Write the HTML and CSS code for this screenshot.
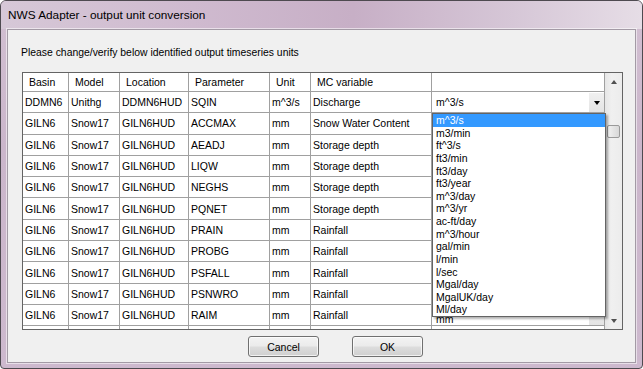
FILE: index.html
```html
<!DOCTYPE html>
<html lang="en">
<head>
    <meta charset="UTF-8">
    <meta name="viewport" content="width=device-width, initial-scale=1.0">
    <title>NWS Adapter - output unit conversion</title>
    <link rel="stylesheet" href="styles.css">
</head>
<body>
    <div class="window">
        <div class="titlebar">NWS Adapter - output unit conversion</div>
        <div class="client">
            <p class="label">Please change/verify below identified output timeseries units</p>

            <div class="grid">
                <div class="cells">
                    <div class="row head">
                        <div class="cell">Basin</div>
                        <div class="cell">Model</div>
                        <div class="cell">Location</div>
                        <div class="cell">Parameter</div>
                        <div class="cell">Unit</div>
                        <div class="cell">MC variable</div>
                        <div class="cell"></div>
                    </div>
                    <div class="row">
                        <div class="cell">DDMN6</div>
                        <div class="cell">Unithg</div>
                        <div class="cell">DDMN6HUD</div>
                        <div class="cell">SQIN</div>
                        <div class="cell">m^3/s</div>
                        <div class="cell">Discharge</div>
                        <div class="cell combo"><span>m^3/s</span><span class="drop-btn"><i class="tri-down"></i></span></div>
                    </div>
                    <!-- unit cells of the rows below are hidden by the open list -->
                    <div class="row">
                        <div class="cell">GILN6</div>
                        <div class="cell">Snow17</div>
                        <div class="cell">GILN6HUD</div>
                        <div class="cell">ACCMAX</div>
                        <div class="cell">mm</div>
                        <div class="cell">Snow Water Content</div>
                        <div class="cell"></div>
                    </div>
                    <div class="row">
                        <div class="cell">GILN6</div>
                        <div class="cell">Snow17</div>
                        <div class="cell">GILN6HUD</div>
                        <div class="cell">AEADJ</div>
                        <div class="cell">mm</div>
                        <div class="cell">Storage depth</div>
                        <div class="cell"></div>
                    </div>
                    <div class="row">
                        <div class="cell">GILN6</div>
                        <div class="cell">Snow17</div>
                        <div class="cell">GILN6HUD</div>
                        <div class="cell">LIQW</div>
                        <div class="cell">mm</div>
                        <div class="cell">Storage depth</div>
                        <div class="cell"></div>
                    </div>
                    <div class="row">
                        <div class="cell">GILN6</div>
                        <div class="cell">Snow17</div>
                        <div class="cell">GILN6HUD</div>
                        <div class="cell">NEGHS</div>
                        <div class="cell">mm</div>
                        <div class="cell">Storage depth</div>
                        <div class="cell"></div>
                    </div>
                    <div class="row">
                        <div class="cell">GILN6</div>
                        <div class="cell">Snow17</div>
                        <div class="cell">GILN6HUD</div>
                        <div class="cell">PQNET</div>
                        <div class="cell">mm</div>
                        <div class="cell">Storage depth</div>
                        <div class="cell"></div>
                    </div>
                    <div class="row">
                        <div class="cell">GILN6</div>
                        <div class="cell">Snow17</div>
                        <div class="cell">GILN6HUD</div>
                        <div class="cell">PRAIN</div>
                        <div class="cell">mm</div>
                        <div class="cell">Rainfall</div>
                        <div class="cell"></div>
                    </div>
                    <div class="row">
                        <div class="cell">GILN6</div>
                        <div class="cell">Snow17</div>
                        <div class="cell">GILN6HUD</div>
                        <div class="cell">PROBG</div>
                        <div class="cell">mm</div>
                        <div class="cell">Rainfall</div>
                        <div class="cell"></div>
                    </div>
                    <div class="row">
                        <div class="cell">GILN6</div>
                        <div class="cell">Snow17</div>
                        <div class="cell">GILN6HUD</div>
                        <div class="cell">PSFALL</div>
                        <div class="cell">mm</div>
                        <div class="cell">Rainfall</div>
                        <div class="cell"></div>
                    </div>
                    <div class="row">
                        <div class="cell">GILN6</div>
                        <div class="cell">Snow17</div>
                        <div class="cell">GILN6HUD</div>
                        <div class="cell">PSNWRO</div>
                        <div class="cell">mm</div>
                        <div class="cell">Rainfall</div>
                        <div class="cell"></div>
                    </div>
                    <div class="row">
                        <div class="cell">GILN6</div>
                        <div class="cell">Snow17</div>
                        <div class="cell">GILN6HUD</div>
                        <div class="cell">RAIM</div>
                        <div class="cell">mm</div>
                        <div class="cell">Rainfall</div>
                        <div class="cell combo low"><span>mm</span><span class="drop-btn"></span></div>
                    </div>
                    <div class="row">
                        <div class="cell"></div>
                        <div class="cell"></div>
                        <div class="cell"></div>
                        <div class="cell"></div>
                        <div class="cell"></div>
                        <div class="cell"></div>
                        <div class="cell"></div>
                    </div>
                </div>

                <div class="vscroll">
                    <div class="sb-btn"><i class="tri-up"></i></div>
                    <div class="sb-track"><div class="sb-thumb"></div></div>
                    <div class="sb-btn"><i class="tri-down gray"></i></div>
                </div>

                <!-- open combo list of the first row -->
                <ul class="droplist">
                    <li class="selected">m^3/s</li>
                    <li>m3/min</li>
                    <li>ft^3/s</li>
                    <li>ft3/min</li>
                    <li>ft3/day</li>
                    <li>ft3/year</li>
                    <li>m^3/day</li>
                    <li>m^3/yr</li>
                    <li>ac-ft/day</li>
                    <li>m^3/hour</li>
                    <li>gal/min</li>
                    <li>l/min</li>
                    <li>l/sec</li>
                    <li>Mgal/day</li>
                    <li>MgalUK/day</li>
                    <li>Ml/day</li>
                </ul>
            </div>

            <div class="buttons">
                <button class="btn">Cancel</button>
                <button class="btn">OK</button>
            </div>
        </div>
    </div>
</body>
</html>
```

FILE: styles.css
```css
body {
    margin: 0;
    padding: 0;
    background-color: #ffffff;
    font-family: "Liberation Sans", Arial, sans-serif;
}

.window {
    width: 643px;
    height: 369px;
    box-sizing: border-box;
    border: 1px solid #4e4a50;
    border-radius: 6px 6px 4px 4px;
    background: linear-gradient(180deg, #d2c0d2 0%, #cbb6cb 40%, #cdb9ce 100%);
    overflow: hidden;
}

.titlebar {
    height: 28px;
    box-sizing: border-box;
    padding: 6px 0 0 7px;
    line-height: 16px;
    font-size: 11.8px;
    color: #000000;
    background: linear-gradient(90deg, #d6c8d7 0%, #cfbacf 30%, #c7afc6 55%, #d6c7d7 80%, #e6dde6 100%);
}

.client {
    margin: 0 6px;
    height: 334px;
    box-sizing: border-box;
    border: 1px solid #a39aa5;
    background-color: #f0f0f0;
    box-shadow: 0 0 0 1px rgba(255, 255, 255, 0.55);
}

.label {
    margin: 16px 0 0 13px;
    font-size: 10.4px;
    line-height: 13px;
    color: #000000;
}

.grid {
    position: relative;
    display: flex;
    margin: 13px 0 0 14px;
    width: 601px;
    height: 258px;
    box-sizing: border-box;
    border: 1px solid #646464;
    background-color: #ffffff;
    overflow: hidden;
}

.cells {
    width: 582px;
    flex: none;
    overflow: hidden;
}

.row {
    display: grid;
    grid-template-columns: 46px 51px 69px 81px 41px 121px 173px;
    height: 21.3px;
}

.row.head {
    height: 19px;
}

.cell {
    display: flex;
    align-items: center;
    box-sizing: border-box;
    padding-left: 2px;
    border-right: 1px solid #a0a0a0;
    border-bottom: 1px solid #a0a0a0;
    font-size: 10.5px;
    color: #000000;
    white-space: nowrap;
    overflow: hidden;
}

.head .cell {
    padding-left: 6px;
    background-color: #ffffff;
}

.combo {
    justify-content: space-between;
    padding-left: 4px;
    padding-right: 0;
}

/* last row: only its lower edge shows below the list */
.combo.low {
    align-items: flex-end;
    line-height: 12px;
}

.drop-btn {
    display: flex;
    align-items: center;
    justify-content: center;
    width: 15px;
    height: calc(100% - 1px);
    margin-top: 1px;
    background: linear-gradient(180deg, #f0f0f0, #e4e4e4);
}

.tri-down {
    width: 0;
    height: 0;
    border-top: 4px solid #000000;
    border-left: 3px solid transparent;
    border-right: 3px solid transparent;
}

.tri-up {
    width: 0;
    height: 0;
    border-bottom: 4px solid #505050;
    border-left: 3.5px solid transparent;
    border-right: 3.5px solid transparent;
}

.tri-down.gray {
    border-top-color: #505050;
    border-left-width: 3.5px;
    border-right-width: 3.5px;
}

.vscroll {
    width: 17px;
    flex: none;
    display: flex;
    flex-direction: column;
    background: linear-gradient(90deg, #e6e6e6, #f0f0f0 40%, #ececec);
}

.sb-btn {
    height: 17px;
    display: flex;
    align-items: center;
    justify-content: center;
}

.sb-track {
    flex: 1;
}

.sb-thumb {
    width: 13px;
    height: 13px;
    margin: 35px 0 0 2px;
    box-sizing: border-box;
    border: 1px solid #9a9a9a;
    border-radius: 2px;
    background: linear-gradient(90deg, #f2f2f2, #e4e4e4 50%, #d8d8d8);
}

.droplist {
    position: absolute;
    left: 409px;
    top: 40px;
    width: 174px;
    height: 204px;
    box-sizing: border-box;
    margin: 0;
    padding: 0;
    list-style-type: none;
    border: 1px solid #646464;
    background-color: #ffffff;
    box-shadow: 2px 2px 2px rgba(0, 0, 0, 0.3);
}

.droplist li {
    height: 12.625px;
    line-height: 12.625px;
    padding-left: 3px;
    font-size: 10.5px;
    color: #000000;
    white-space: nowrap;
}

.droplist li.selected {
    background-color: #3399ff;
    color: #ffffff;
}

.buttons {
    display: flex;
    gap: 33px;
    margin-top: 6px;
    padding-left: 240px;
}

.btn {
    width: 71px;
    height: 21px;
    padding: 0;
    font-family: "Liberation Sans", Arial, sans-serif;
    font-size: 10.5px;
    color: #000000;
    border: 1px solid #707070;
    border-radius: 3px;
    background: linear-gradient(180deg, #f3f3f3 0%, #ebebeb 48%, #dddddd 52%, #cfcfcf 100%);
    box-shadow: inset 0 0 0 1px rgba(255, 255, 255, 0.7);
}
```
